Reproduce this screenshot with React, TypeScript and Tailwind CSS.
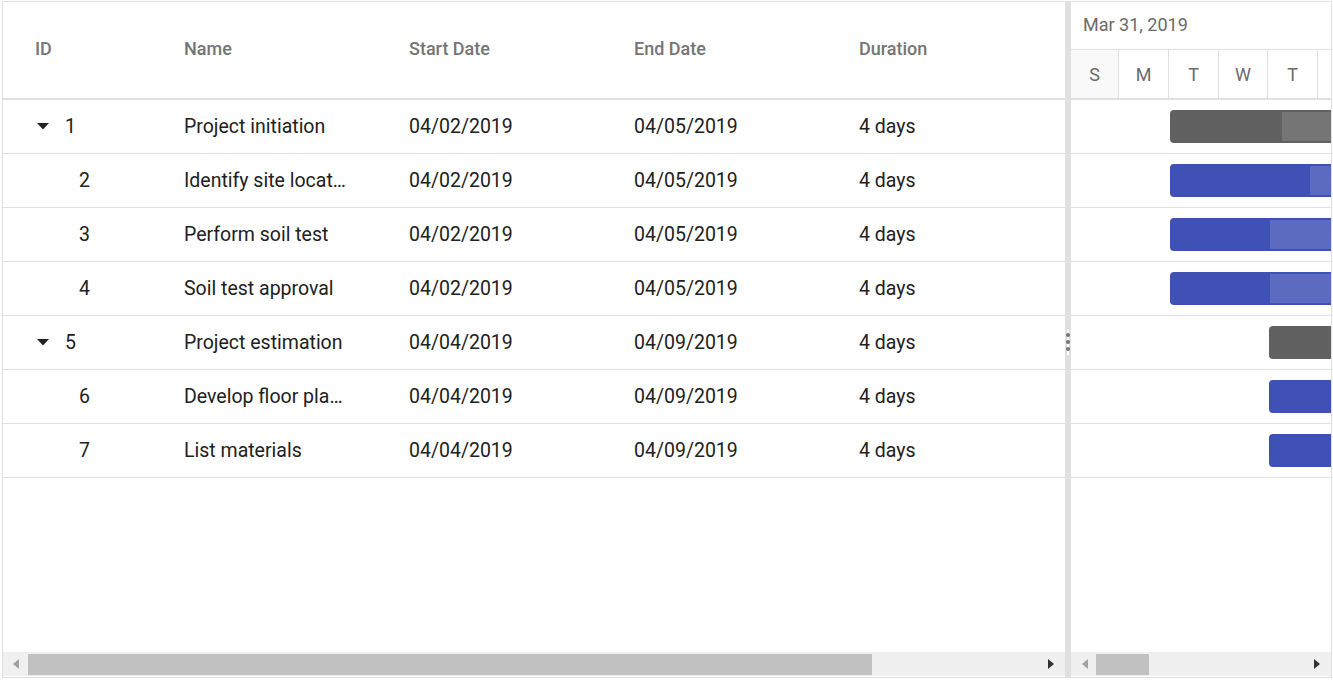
import React from "react";

type Row = {
  id: number;
  name: string;
  start: string;
  end: string;
  dur: string;
  parent: boolean;
  barLeft: number;
  progress: number;
};

const rows: Row[] = [
  { id: 1, name: "Project initiation", start: "04/02/2019", end: "04/05/2019", dur: "4 days", parent: true, barLeft: 99, progress: 112 },
  { id: 2, name: "Identify site location", start: "04/02/2019", end: "04/05/2019", dur: "4 days", parent: false, barLeft: 99, progress: 140 },
  { id: 3, name: "Perform soil test", start: "04/02/2019", end: "04/05/2019", dur: "4 days", parent: false, barLeft: 99, progress: 100 },
  { id: 4, name: "Soil test approval", start: "04/02/2019", end: "04/05/2019", dur: "4 days", parent: false, barLeft: 99, progress: 100 },
  { id: 5, name: "Project estimation", start: "04/04/2019", end: "04/09/2019", dur: "4 days", parent: true, barLeft: 198, progress: 120 },
  { id: 6, name: "Develop floor plan for estimation", start: "04/04/2019", end: "04/09/2019", dur: "4 days", parent: false, barLeft: 198, progress: 120 },
  { id: 7, name: "List materials", start: "04/04/2019", end: "04/09/2019", dur: "4 days", parent: false, barLeft: 198, progress: 120 },
];

function Caret() {
  return (
    <svg width="12" height="7" viewBox="0 0 12 7" className="block">
      <polygon points="0,0 12,0 6,6.5" fill="#212121" />
    </svg>
  );
}

function ArrowLeft({ color }: { color: string }) {
  return (
    <svg width="6" height="10" viewBox="0 0 6 10" className="block">
      <polygon points="6,0 6,10 0,5" fill={color} />
    </svg>
  );
}

function ArrowRight({ color }: { color: string }) {
  return (
    <svg width="6" height="10" viewBox="0 0 6 10" className="block">
      <polygon points="0,0 0,10 6,5" fill={color} />
    </svg>
  );
}

export default function App() {
  return (
    <div
      className="w-[1333px] h-[680px] bg-white pl-[2px] pt-[1px]"
      style={{ fontFamily: "Roboto, 'Noto Sans', sans-serif" }}
    >
      <div className="w-[1330px] h-[677px] border border-[#e0e0e0] flex overflow-hidden">
        {/* Grid pane */}
        <div className="w-[1062px] flex flex-col overflow-hidden">
          <div className="h-[98px] pb-[3px] flex items-center border-b-2 border-[#e0e0e0] text-[18px] font-medium text-[#757575] shrink-0">
            <div className="w-[166px] pl-[32px] shrink-0">ID</div>
            <div className="w-[225px] pl-[15px] shrink-0">Name</div>
            <div className="w-[225px] pl-[15px] shrink-0">Start Date</div>
            <div className="w-[225px] pl-[15px] shrink-0">End Date</div>
            <div className="w-[225px] pl-[15px] shrink-0">Duration</div>
          </div>
          <div className="flex-1 text-[19.5px] text-[#212121]">
            {rows.map((r) => (
              <div key={r.id} className="h-[54px] flex items-center border-b border-[#e0e0e0]">
                <div className="w-[166px] shrink-0 flex items-center">
                  {r.parent ? (
                    <>
                      <div className="ml-[33px] w-[13px] flex justify-center">
                        <Caret />
                      </div>
                      <span className="ml-[16px]">{r.id}</span>
                    </>
                  ) : (
                    <span className="ml-[76px]">{r.id}</span>
                  )}
                </div>
                <div className="w-[225px] pl-[15px] shrink-0">
                  <div className="max-w-[166px] whitespace-nowrap overflow-hidden text-ellipsis">{r.name}</div>
                </div>
                <div className="w-[225px] pl-[15px] shrink-0">{r.start}</div>
                <div className="w-[225px] pl-[15px] shrink-0">{r.end}</div>
                <div className="w-[225px] pl-[15px] shrink-0">{r.dur}</div>
              </div>
            ))}
          </div>
          <div className="h-[25px] shrink-0 pb-[1px]">
            <div className="h-[24px] bg-[#f0f0f0] flex items-center">
              <div className="w-[25px] flex justify-center">
                <ArrowLeft color="#a3a3a3" />
              </div>
              <div className="w-[844px] h-[21px] bg-[#c1c1c1] mt-[1px]" />
              <div className="flex-1" />
              <div className="w-[25px] flex justify-center pr-[4px]">
                <ArrowRight color="#333333" />
              </div>
            </div>
          </div>
        </div>

        {/* Splitter */}
        <div className="w-[6px] shrink-0 bg-[#e0e0e0] flex flex-col items-center pt-[327px]">
          <div className="w-[2px] h-[26px] bg-white flex flex-col items-center justify-center gap-[3px] overflow-visible">
            <div className="w-[4px] h-[4px] shrink-0 rounded-full bg-[#757575]" />
            <div className="w-[4px] h-[4px] shrink-0 rounded-full bg-[#757575]" />
            <div className="w-[4px] h-[4px] shrink-0 rounded-full bg-[#757575]" />
          </div>
        </div>

        {/* Chart pane */}
        <div className="w-[260px] shrink-0 flex flex-col overflow-hidden">
          <div className="h-[48px] shrink-0 border-b border-[#e0e0e0] flex items-center pl-[12px] pb-[2px] text-[18px] text-[#6b6b6b] whitespace-nowrap">
            Mar 31, 2019
          </div>
          <div className="h-[50px] shrink-0 border-b-2 border-[#e0e0e0] flex text-[18px] text-[#6b6b6b]">
            <div className="w-[48px] shrink-0 border-r border-[#e0e0e0] bg-[#f9f9f9] flex items-center justify-center">S</div>
            <div className="w-[50px] shrink-0 border-r border-[#e0e0e0] flex items-center justify-center">M</div>
            <div className="w-[50px] shrink-0 border-r border-[#e0e0e0] flex items-center justify-center">T</div>
            <div className="w-[49px] shrink-0 border-r border-[#e0e0e0] flex items-center justify-center">W</div>
            <div className="w-[50px] shrink-0 border-r border-[#e0e0e0] flex items-center justify-center">T</div>
            <div className="w-[50px] shrink-0" />
          </div>
          <div className="flex-1">
            {rows.map((r) => {
              const dark = r.parent ? "bg-[#616161]" : "bg-[#3f51b5]";
              const light = r.parent ? "bg-[#757575]" : "bg-[#5c6bc0]";
              return (
                <div key={r.id} className="h-[54px] border-b border-[#e0e0e0] flex items-center">
                  <div
                    className={`h-[33px] w-[200px] shrink-0 rounded-[4px] flex ${dark}`}
                    style={{ marginLeft: r.barLeft }}
                  >
                    <div className="h-full shrink-0" style={{ width: r.progress }} />
                    <div className={`flex-1 my-[2px] ${light}`} />
                  </div>
                </div>
              );
            })}
          </div>
          <div className="h-[25px] shrink-0 pb-[1px]">
            <div className="h-[24px] bg-[#f0f0f0] flex items-center">
              <div className="w-[25px] flex justify-center pl-[3px]">
                <ArrowLeft color="#a3a3a3" />
              </div>
              <div className="w-[53px] h-[21px] bg-[#c1c1c1] mt-[1px]" />
              <div className="flex-1" />
              <div className="w-[25px] flex justify-center pr-[4px]">
                <ArrowRight color="#333333" />
              </div>
            </div>
          </div>
        </div>
      </div>
    </div>
  );
}
